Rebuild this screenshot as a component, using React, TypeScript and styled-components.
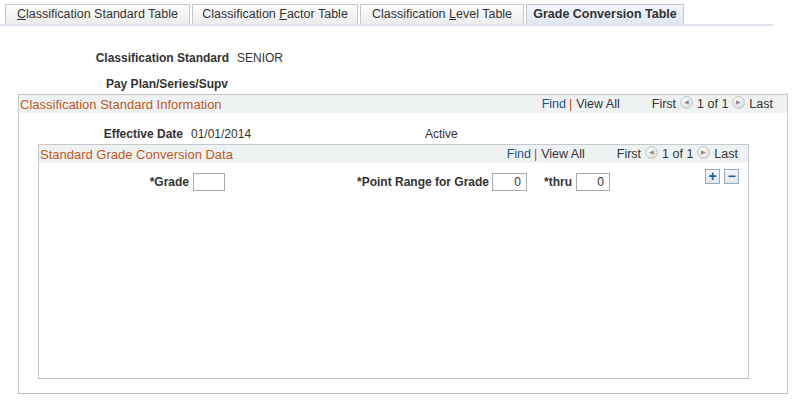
import React from "react";
import styled, { createGlobalStyle } from "styled-components";

const G = createGlobalStyle`
  body { margin: 0; background: #fff; font-family: "Liberation Sans", Arial, sans-serif; font-size: 12px; color: #333; }
`;
const Page = styled.div`width: 795px; height: 401px; position: relative; overflow: hidden;`;
const Tabs = styled.div`display: flex; gap: 1px; padding: 4px 0 0 5px; width: 768px; border-bottom: 2px solid #dde3ee; height: 20px; box-sizing: content-box;`;
const Tab = styled.div<{ $w: number; $active?: boolean }>`
  width: ${p => p.$w}px; box-sizing: border-box; height: 20px; border: 1px solid #c4c8cc; border-bottom: none;
  background: ${p => p.$active ? "linear-gradient(#f3f6fb,#dfe7f2)" : "linear-gradient(#fdfdfd,#ececec)"};
  font-weight: ${p => p.$active ? "bold" : "normal"};
  text-align: center; line-height: 19px; font-size: 12.5px; margin-right: 1px;
  u { text-decoration: underline; }
`;
const Row = styled.div<{ $top: number }>`display: flex; align-items: center; margin-top: ${p => p.$top}px; height: 16px;`;
const Label = styled.div<{ $w: number }>`width: ${p => p.$w}px; text-align: right; font-weight: bold; flex: none;`;
const Value = styled.div<{ $ml: number; $w?: number }>`margin-left: ${p => p.$ml}px; ${p => p.$w ? `width:${p.$w}px;` : ""} flex: none;`;
const Panel = styled.div<{ $ml: number; $w: number; $h: number; $mt: number }>`
  margin: ${p => p.$mt}px 0 0 ${p => p.$ml}px; width: ${p => p.$w}px; height: ${p => p.$h}px; box-sizing: border-box;
  border: 1px solid #c6c9cc; border-bottom-color: #b8bdc2;
`;
const Head = styled.div<{ $pr: number }>`display: flex; align-items: center; height: 18px; background: #eff2f3; padding: 0 ${p => p.$pr}px 0 1px;`;
const Title = styled.div`color: #bd5a1e; font-size: 13px; flex: 1;`;
const Nav = styled.div`display: flex; align-items: center; color: #333; font-size: 12.5px;`;
const Link = styled.span`color: #1d4f91;`;
const Sep = styled.span`color: #c0392b; margin: 0 4px 0 3px;`;
const Circ = styled.span`display: inline-block; width: 13px; height: 13px; border-radius: 50%; margin: 0 4px;
  background: radial-gradient(circle at 40% 35%, #fff, #d2d2d2); border: 1px solid #c8c8c8; box-sizing: border-box; position: relative; top: -2px;
  font-size: 6px; line-height: 11px; text-align: center; color: #888;`;
const Input = styled.div<{ $w: number }>`width: ${p => p.$w}px; height: 18px; box-sizing: border-box; border: 1px solid #a9a9a9;
  text-align: right; padding-right: 5px; line-height: 16px; flex: none;`;
const Btn = styled.div`width: 15px; height: 15px; box-sizing: border-box; border: 1px solid #9aaab8; background: linear-gradient(#f4f7fa,#dfe6ee);
  display: flex; align-items: center; justify-content: center; flex: none; color: #1d5fa0; font-weight: bold; font-size: 14px; line-height: 13px;`;
const Body = styled.div`display: flex; align-items: flex-start;`;
const Btns = styled.div`display: flex; gap: 4px; margin: 6px 0 0 95px;`;

const Pager = () => (
  <Nav>
    <Link>Find</Link><Sep>|</Sep><Link style={{ color: "#333" }}>View All</Link>
    <span style={{ marginLeft: 32 }}>First</span><Circ>◀</Circ><span>1 of 1</span><Circ>▶</Circ><span>Last</span>
  </Nav>
);

export default function App() {
  return (
    <Page>
      <G />
      <Tabs>
        <Tab $w={185}><u>C</u>lassification Standard Table</Tab>
        <Tab $w={166}>Classification <u>F</u>actor Table</Tab>
        <Tab $w={164}>Classification <u>L</u>evel Table</Tab>
        <Tab $w={158} $active>Grade Conversion Table</Tab>
      </Tabs>
      <Row $top={24}><Label $w={229}>Classification Standard</Label><Value $ml={8}>SENIOR</Value></Row>
      <Row $top={10}><Label $w={228}>Pay Plan/Series/Supv</Label></Row>
      <Panel $ml={18} $w={770} $h={300} $mt={2}>
        <Head $pr={14}><Title>Classification Standard Information</Title><Pager /></Head>
        <Row $top={13}><Label $w={164}>Effective Date</Label><Value $ml={8} $w={234}>01/01/2014</Value><Value $ml={0}>Active</Value></Row>
        <Panel $ml={19} $w={711} $h={235} $mt={2}>
          <Head $pr={10}><Title>Standard Grade Conversion Data</Title><Pager /></Head>
          <Body>
            <Row $top={10} style={{ height: 18 }}>
              <Label $w={150}>*Grade</Label><Value $ml={4}><Input $w={32} /></Value>
              <Label $w={264}>*Point Range for Grade</Label><Value $ml={3}><Input $w={35}>0</Input></Value>
              <Label $w={45}>*thru</Label><Value $ml={4}><Input $w={34}>0</Input></Value>
            </Row>
            <Btns><Btn>+</Btn><Btn>−</Btn></Btns>
          </Body>
        </Panel>
      </Panel>
    </Page>
  );
}
